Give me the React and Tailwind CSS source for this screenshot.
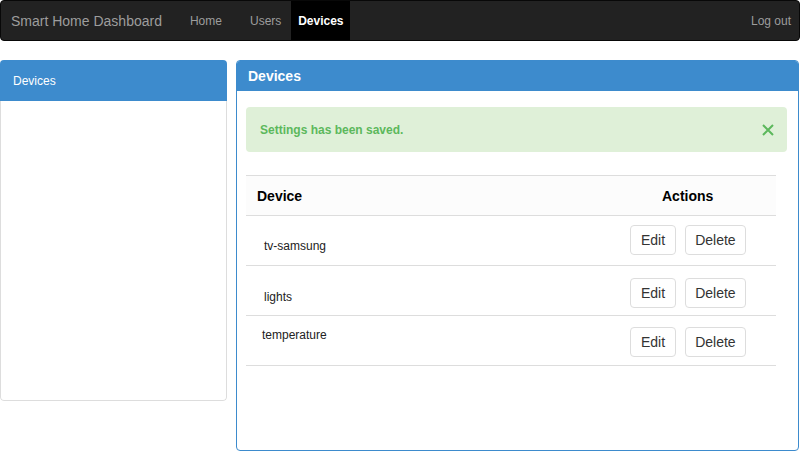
const devices = [
  { name: "tv-samsung", textPad: "pt-[23px] pl-[18px]", btnPad: "pt-[9px]" },
  { name: "lights", textPad: "pt-[24px] pl-[18px]", btnPad: "pt-[12px]" },
  { name: "temperature", textPad: "pt-[12px] pl-[16px]", btnPad: "pt-[11px]" },
];

function NavBar() {
  return (
    <nav className="flex h-[41px] w-[800px] items-stretch rounded-[4px] border border-[#080808] bg-[#222] text-[12px] text-[#9d9d9d]">
      <span className="flex items-center pl-[10px] pr-[19px] text-[14px] leading-none">
        Smart Home Dashboard
      </span>
      <a className="flex items-center px-[9px]">Home</a>
      <a className="ml-[10px] flex items-center pl-[9px] pr-[10px]">Users</a>
      <a className="flex w-[59px] items-center justify-center bg-black font-bold text-white">
        Devices
      </a>
      <a className="ml-auto flex items-center pr-[8px]">Log out</a>
    </nav>
  );
}

function Sidebar() {
  return (
    <aside className="flex h-[341px] w-[227px] flex-col overflow-hidden rounded-[4px]">
      <div className="flex h-[41px] items-center bg-[#3d8bcd] pl-[13px] text-[12px] text-white">
        Devices
      </div>
      <div className="flex-1 rounded-b-[4px] border-x border-b border-[#ddd] bg-white" />
    </aside>
  );
}

function DeviceRow({ device }) {
  return (
    <div className="flex h-[50px] items-start border-b border-[#ddd]">
      <div className={`flex-1 text-[12px] leading-[14px] text-[#222] ${device.textPad}`}>
        {device.name}
      </div>
      <div className={`flex w-[146px] gap-[9px] ${device.btnPad}`}>
        <button className="h-[30px] rounded-[4px] border border-[#ddd] bg-white px-[10px] text-[14px] text-[#333]">
          Edit
        </button>
        <button className="h-[30px] rounded-[4px] border border-[#ddd] bg-white px-[9px] text-[14px] text-[#333]">
          Delete
        </button>
      </div>
    </div>
  );
}

function DevicesPanel() {
  return (
    <section className="flex h-[391px] w-[563px] flex-col overflow-hidden rounded-[4px] border border-[#3d8bcd] bg-white">
      <div className="flex h-[30px] items-center bg-[#3d8bcd] pl-[11px] text-[14px] font-bold text-white">
        Devices
      </div>
      <div className="pl-[9px] pr-[11px] pt-[16px]">
        <div className="flex h-[45px] items-center justify-between rounded-[4px] bg-[#dff0d8] pl-[14px] pr-[13px] text-[12px] font-bold text-[#5cb85c]">
          <span>Settings has been saved.</span>
          <svg width="12" height="12" viewBox="0 0 12 12" fill="none">
            <path d="M1 1 L11 11 M11 1 L1 11" stroke="#5cb85c" strokeWidth="2" />
          </svg>
        </div>
        <div className="mt-[23px] w-[530px] border-t border-[#ddd]">
          <div className="flex h-[40px] items-center border-b border-[#ddd] bg-[#fcfcfc] pt-[2px] text-[14px] font-bold text-black">
            <div className="flex-1 pl-[11px]">Device</div>
            <div className="w-[146px] pl-[32px]">Actions</div>
          </div>
          {devices.map((d) => (
            <DeviceRow key={d.name} device={d} />
          ))}
        </div>
      </div>
    </section>
  );
}

export default function App() {
  return (
    <div className="h-[452px] w-[802px] bg-white font-['Liberation_Sans',Arial,sans-serif]">
      <NavBar />
      <div className="mt-[19px] flex items-start gap-[9px]">
        <Sidebar />
        <DevicesPanel />
      </div>
    </div>
  );
}
